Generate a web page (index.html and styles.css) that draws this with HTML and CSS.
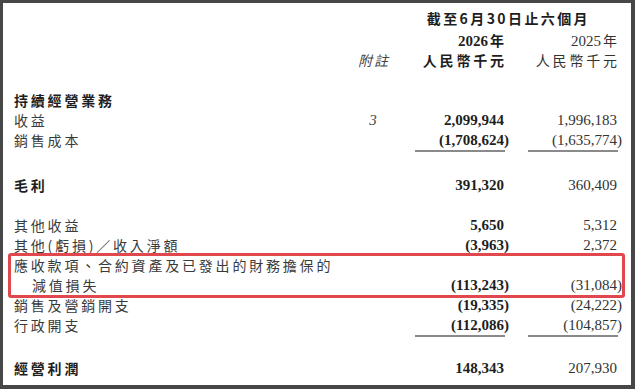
FILE: index.html
```html
<!DOCTYPE html>
<html lang="zh-Hant">
<head>
<meta charset="utf-8">
<link rel="stylesheet" href="styles.css">
</head>
<body>
<div class="panel">
  <div class="row h1"><span class="span2 period b">截至6月30日止六個月</span></div>
  <div class="row h2"><span class="c3 num b">2026<span class="cjk">年</span></span><span class="c4 num">2025<span class="cjk">年</span></span></div>
  <div class="row"><span class="c2 note cjk it">附註</span><span class="c3 cur b">人民幣千元</span><span class="c4 cur">人民幣千元</span></div>
  <div class="sp20"></div>
  <div class="row"><span class="lbl b">持續經營業務</span></div>
  <div class="row"><span class="lbl">收益</span><span class="c2 note it num">3</span><span class="c3 num b">2,099,944</span><span class="c4 num">1,996,183</span></div>
  <div class="row"><span class="lbl">銷售成本</span><span class="c3 num b">(1,708,624<span class="cp">)</span></span><span class="c4 num">(1,635,774<span class="cp">)</span></span></div>
  <div class="row rule"><span class="c3"><i class="line"></i></span><span class="c4"><i class="line"></i></span></div>
  <div class="sp23"></div>
  <div class="row"><span class="lbl b">毛利</span><span class="c3 num b">391,320</span><span class="c4 num">360,409</span></div>
  <div class="sp20"></div>
  <div class="row"><span class="lbl">其他收益</span><span class="c3 num b">5,650</span><span class="c4 num">5,312</span></div>
  <div class="row"><span class="lbl">其他(虧損)／收入淨額</span><span class="c3 num b">(3,963<span class="cp">)</span></span><span class="c4 num">2,372</span></div>
  <div class="hl">
    <div class="row"><span class="lbl wide">應收款項、合約資產及已發出的財務擔保的</span></div>
    <div class="row"><span class="lbl ind">減值損失</span><span class="c3 num b">(113,243<span class="cp">)</span></span><span class="c4 num">(31,084<span class="cp">)</span></span></div>
  </div>
  <div class="row"><span class="lbl">銷售及營銷開支</span><span class="c3 num b">(19,335<span class="cp">)</span></span><span class="c4 num">(24,222<span class="cp">)</span></span></div>
  <div class="row"><span class="lbl">行政開支</span><span class="c3 num b">(112,086<span class="cp">)</span></span><span class="c4 num">(104,857<span class="cp">)</span></span></div>
  <div class="row rule"><span class="c3"><i class="line"></i></span><span class="c4"><i class="line"></i></span></div>
  <div class="sp21"></div>
  <div class="row"><span class="lbl b">經營利潤</span><span class="c3 num b">148,343</span><span class="c4 num">207,930</span></div>
</div>
</body>
</html>
```

FILE: styles.css
```css
html, body {
  margin: 0;
  padding: 0;
  background: #474747;
}
body {
  width: 635px;
  height: 389px;
  overflow: hidden;
}
.panel {
  margin: 3px 0 0 3px;
  width: 628px;
  height: 382px;
  background: #ffffff;
  box-sizing: border-box;
  padding: 5px 14px 0 11px;
  font-family: "Liberation Serif", "Noto Sans CJK TC", serif;
  color: #333;
}
.row {
  display: grid;
  grid-template-columns: 336px 46px 108px 113px;
  height: 20px;
  line-height: 20px;
  white-space: nowrap;
}
.h1 { margin-bottom: 2px; }
.cjk, .lbl, .cur, .period {
  font-family: "Noto Sans CJK TC", sans-serif;
  font-size: 14px;
  letter-spacing: 2.8px;
}
.lbl { grid-column: 1; color: #3a3a3a; }
.lbl.b { color: #1e1e1e; }
.lbl.wide { grid-column: 1 / 5; }
.ind { padding-left: 18px; }
.b { font-weight: 700; color: #1e1e1e; }
.it { font-style: italic; }
.num { font-size: 15px; text-align: right; }
.num .cjk { letter-spacing: 0; margin-left: 2px; }
.c2 { grid-column: 2; text-align: center; }
.note { color: #444; }
.note.cjk { letter-spacing: 2px; margin-right: -2px; }
.c3 { grid-column: 3; text-align: right; }
.c4 { grid-column: 4; text-align: right; }
.cur { margin-right: -2.8px; }
.span2 { grid-column: 3 / 5; }
.period { text-align: right; padding-right: 27px; letter-spacing: 2.4px; }
.cp { margin-right: -5px; }
.rule { height: 2px; line-height: 0; }
.line {
  display: inline-block;
  width: 90px;
  height: 2px;
  background: #8a8a8a;
  margin-right: -1px;
  vertical-align: top;
}
.sp20 { height: 20px; }
.sp21 { height: 21px; }
.sp23 { height: 23px; }
.hl { position: relative; }
.hl::after {
  content: "";
  position: absolute;
  left: -6px;
  right: -8px;
  top: -2px;
  bottom: -3px;
  border: 3px solid #e0484d;
  border-radius: 3px;
  pointer-events: none;
}
```
